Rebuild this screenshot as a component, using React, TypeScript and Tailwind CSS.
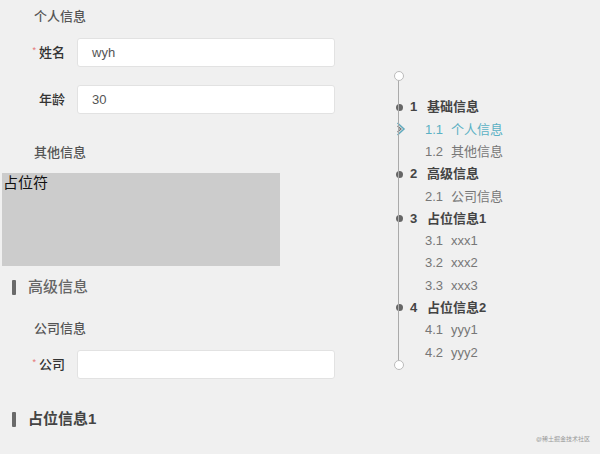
import React from 'react';

const font = { fontFamily: '"Liberation Sans", "Noto Sans CJK SC", sans-serif' };

interface NavItem {
  no: string;
  label: string;
  level: 1 | 2;
  active?: boolean;
}

const navItems: NavItem[] = [
  { no: '1', label: '基础信息', level: 1 },
  { no: '1.1', label: '个人信息', level: 2, active: true },
  { no: '1.2', label: '其他信息', level: 2 },
  { no: '2', label: '高级信息', level: 1 },
  { no: '2.1', label: '公司信息', level: 2 },
  { no: '3', label: '占位信息1', level: 1 },
  { no: '3.1', label: 'xxx1', level: 2 },
  { no: '3.2', label: 'xxx2', level: 2 },
  { no: '3.3', label: 'xxx3', level: 2 },
  { no: '4', label: '占位信息2', level: 1 },
  { no: '4.1', label: 'yyy1', level: 2 },
  { no: '4.2', label: 'yyy2', level: 2 },
];

function FormRow({ label, value, required }: { label: string; value?: string; required?: boolean }) {
  return (
    <div className="flex items-center h-[29px]">
      <div className="w-[65px] flex items-center justify-end text-[13px] text-[#333] font-medium">
        {required && <span className="text-[#e57373] text-[9px] mr-[3px] -mt-[3px]">*</span>}
        {label}
      </div>
      <div className="ml-[12px] w-[258px] h-[29px] bg-white border border-[#e2e2e2] rounded-[3px] flex items-center pl-[14px] text-[13px] text-[#555]">
        {value}
      </div>
    </div>
  );
}

function SectionTitle({ text, dark }: { text: string; dark?: boolean }) {
  return (
    <div className="flex items-center pl-[12px] h-[20px]">
      <div className="w-[4px] h-[15px] bg-[#6a6a6a] rounded-[1px]" />
      <span className={`ml-[12px] text-[15px] ${dark ? 'text-[#444] font-semibold' : 'text-[#666] font-medium'}`}>
        {text}
      </span>
    </div>
  );
}

function ActiveMarker() {
  return (
    <svg width="10" height="14" viewBox="0 0 10 14">
      <path d="M1.5 1 L8 7 L1.5 13" fill="none" stroke="#5fa9bd" strokeWidth="1.5" />
      <path d="M1.5 4 L5 7 L1.5 10" fill="none" stroke="#777" strokeWidth="1.3" />
    </svg>
  );
}

export default function App() {
  return (
    <div className="relative w-full min-h-screen h-[454px] bg-[#f0f0f0] flex overflow-hidden" style={font}>
      <div className="w-[360px] flex flex-col">
        <div className="pl-[34px] pt-[9px] text-[13px] text-[#555] font-medium leading-[16px]">个人信息</div>
        <div className="mt-[13px] flex flex-col gap-[18px]">
          <FormRow label="姓名" value="wyh" required />
          <FormRow label="年龄" value="30" />
        </div>
        <div className="pl-[34px] mt-[31px] text-[13px] text-[#555] font-medium leading-[16px]">其他信息</div>
        <div className="ml-[2px] mt-[12px] w-[278px] h-[93px] bg-[#cccccc] text-[15px] text-[#111] leading-[18px] pl-[1px] pt-[1px]">
          占位符
        </div>
        <div className="mt-[11px]">
          <SectionTitle text="高级信息" />
        </div>
        <div className="pl-[34px] mt-[24px] text-[13px] text-[#555] font-medium leading-[16px]">公司信息</div>
        <div className="mt-[13px]">
          <FormRow label="公司" required />
        </div>
        <div className="mt-[30px]">
          <SectionTitle text="占位信息1" dark />
        </div>
      </div>

      <div className="relative ml-[30px] mt-[70px] h-[300px] w-[180px]">
        <div className="absolute left-[8px] top-[5px] h-[290px] w-px bg-[#aaa]" />
        <div className="absolute left-[3.5px] top-[0.5px] w-[10px] h-[10px] rounded-full bg-white border border-[#bbb]" />
        <div className="absolute left-[3.5px] top-[290px] w-[10px] h-[10px] rounded-full bg-white border border-[#bbb]" />
        <div className="pt-[26px] flex flex-col">
          {navItems.map((it) => (
            <div key={it.no} className="flex items-center h-[22.3px]">
              <div className="w-[17px] flex justify-center">
                {it.level === 1 && <div className="w-[7px] h-[7px] rounded-full bg-[#666] ml-px" />}
                {it.active && (
                  <div className="ml-[5px]">
                    <ActiveMarker />
                  </div>
                )}
              </div>
              {it.level === 1 ? (
                <div className="flex text-[13px] text-[#444] font-semibold">
                  <span className="w-[17px] ml-[3px]">{it.no}</span>
                  <span>{it.label}</span>
                </div>
              ) : (
                <div className={`flex text-[13px] ${it.active ? 'text-[#5bb0c4]' : 'text-[#777]'}`}>
                  <span className="w-[26px] ml-[18px]">{it.no}</span>
                  <span>{it.label}</span>
                </div>
              )}
            </div>
          ))}
        </div>
      </div>

      <div className="absolute right-[10px] bottom-[10px] text-[6px] text-[#999]">@稀土掘金技术社区</div>
    </div>
  );
}
